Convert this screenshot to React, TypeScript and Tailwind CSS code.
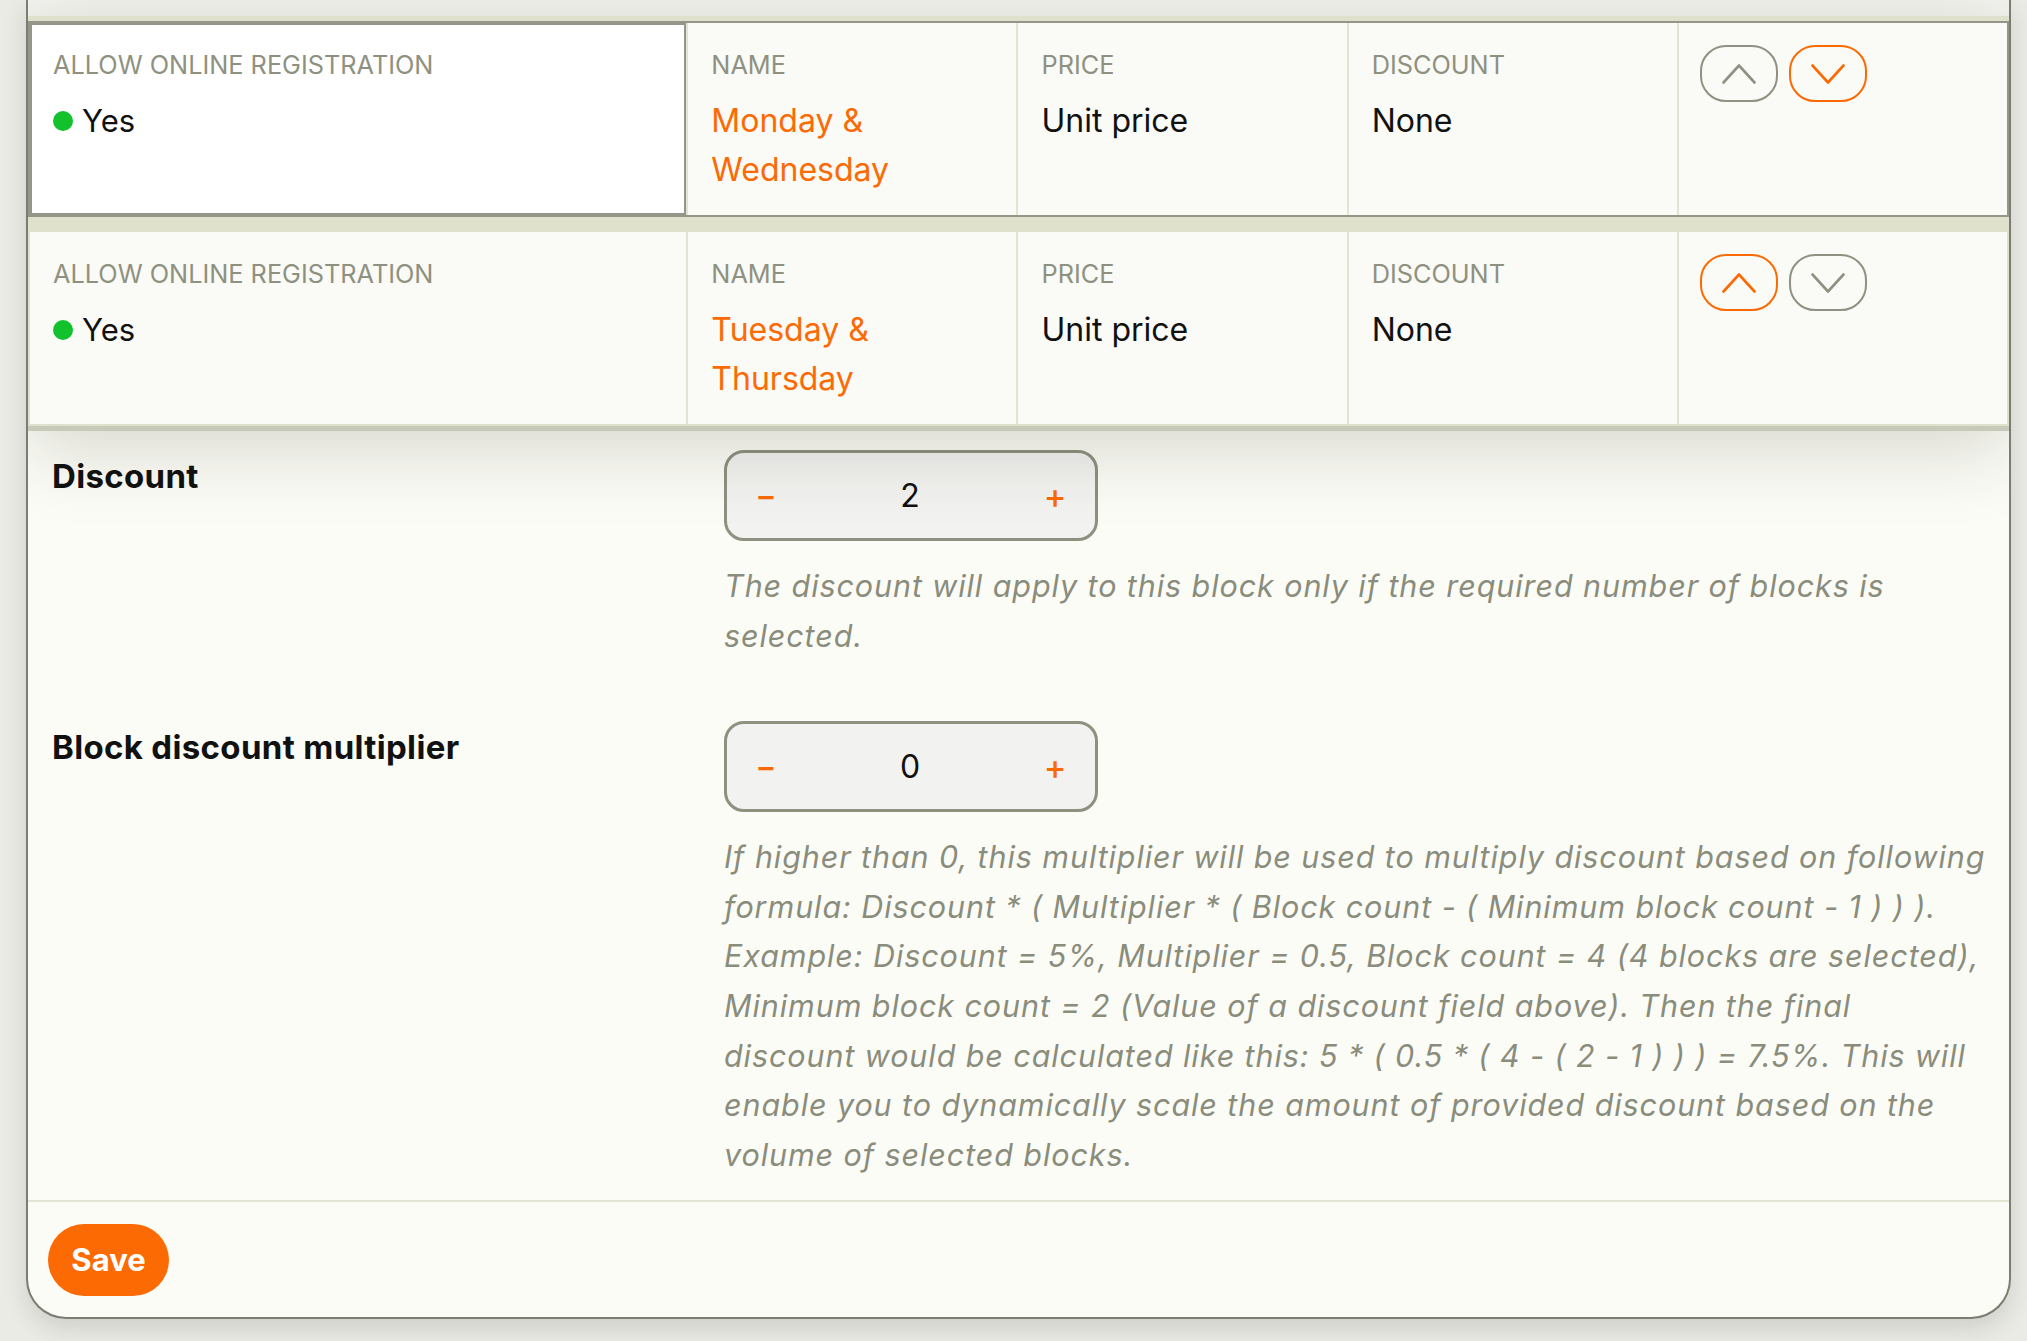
import React from 'react'

type RowProps = {
  name: [string, string]
  selected?: boolean
  upActive?: boolean
  downActive?: boolean
}

function Label({ children }: { children: React.ReactNode }) {
  return <div className="text-[25.3px] leading-[36px] text-[#8f9180] uppercase">{children}</div>
}

function MoveButton({ dir, active }: { dir: 'up' | 'down'; active?: boolean }) {
  return (
    <button
      className={`flex h-[57px] w-[78px] items-center justify-center rounded-[26px] border-2 ${
        active ? 'border-[#fc6a03] text-[#fc6a03]' : 'border-[#8f9182] text-[#8f9182]'
      }`}
    >
      <svg width="34" height="20" viewBox="0 0 34 20" fill="none" stroke="currentColor" strokeWidth="2.6" strokeLinecap="round" strokeLinejoin="round">
        {dir === 'up' ? <polyline points="1.5,18.5 17,1.5 32.5,18.5" /> : <polyline points="1.5,1.5 17,18.5 32.5,1.5" />}
      </svg>
    </button>
  )
}

function BlockRow({ name, selected, upActive, downActive }: RowProps) {
  const cell = 'bg-[#fafaf6] px-[23px] pt-[24px] pb-[21px]'
  return (
    <div
      className={`grid grid-cols-[2fr_1fr_1fr_1fr_1fr] gap-[2px] border-2 bg-[#e2e3d2] ${
        selected ? 'border-[#94968a]' : 'border-[#dfe1cc]'
      }`}
    >
      <div className={`px-[23px] pt-[24px] pb-[21px] ${selected ? 'bg-white shadow-[inset_0_0_0_2px_#94968a]' : 'bg-[#fafaf6]'}`}>
        <Label>Allow online registration</Label>
        <div className="mt-[13px] flex items-center gap-[9px] text-[31px] leading-[49px] text-[#111]">
          <span className="h-[20px] w-[20px] rounded-full bg-[#12c22d]" />
          Yes
        </div>
      </div>
      <div className={cell}>
        <Label>Name</Label>
        <div className="mt-[13px] text-[32px] leading-[49px] text-[#fc6a03]">
          {name[0]}
          <br />
          {name[1]}
        </div>
      </div>
      <div className={cell}>
        <Label>Price</Label>
        <div className="mt-[13px] text-[32px] leading-[49px] text-[#111]">Unit price</div>
      </div>
      <div className={cell}>
        <Label>Discount</Label>
        <div className="mt-[13px] text-[32px] leading-[49px] text-[#111]">None</div>
      </div>
      <div className="flex items-start gap-[11px] bg-[#fafaf6] px-[21px] pt-[22px]">
        <MoveButton dir="up" active={upActive} />
        <MoveButton dir="down" active={downActive} />
      </div>
    </div>
  )
}

function Stepper({ value }: { value: number }) {
  return (
    <div className="flex h-[91px] w-[374px] items-center rounded-[20px] border-[3px] border-[#8e9080] bg-[#f2f2f0]">
      <button className="w-[78px] text-center text-[32px] leading-none font-medium text-[#fc6a03]">−</button>
      <div className="flex-1 text-center text-[32px] text-[#111]">{value}</div>
      <button className="w-[80px] text-center text-[34px] leading-none font-medium text-[#fc6a03]">+</button>
    </div>
  )
}

function Field({ label, value, help }: { label: string; value: number; help: string[] }) {
  return (
    <div className="grid grid-cols-[672px_1fr]">
      <div className="pt-[2px] text-[33px] leading-[49px] font-bold tracking-[0.01em] text-[#111]">{label}</div>
      <div>
        <Stepper value={value} />
        <p className="mt-[20px] text-[30.5px] leading-[49.6px] tracking-[0.03em] whitespace-nowrap text-[#8a8c7c] italic">
          {help.map((line, i) => (
            <span key={i} className="block">
              {line}
            </span>
          ))}
        </p>
      </div>
    </div>
  )
}

export default function App() {
  return (
    <div className="h-[1341px] overflow-hidden bg-[#ebebe6] pr-[16px] pb-[22px] pl-[26px] font-['Inter',sans-serif]">
      <div className="overflow-hidden rounded-b-[40px] border-x-2 border-b-2 border-[#7b7d70] bg-[#fcfcf7] shadow-[0_10px_24px_rgba(0,0,0,0.12)]">
        <div className="h-[16px] bg-[#f2f2ee]" />
        <div className="relative z-10 flex flex-col gap-[13px] border-b-[5px] border-[#c8cab9] bg-[#dfe1cc] pt-[5px] shadow-[0_20px_70px_rgba(40,40,20,0.17)]">
          <BlockRow name={['Monday &', 'Wednesday']} selected downActive />
          <BlockRow name={['Tuesday &', 'Thursday']} upActive />
        </div>
        <div className="flex flex-col gap-[61px] pt-[19px] pb-[21px] pl-[24px]">
          <Field
            label="Discount"
            value={2}
            help={['The discount will apply to this block only if the required number of blocks is', 'selected.']}
          />
          <Field
            label="Block discount multiplier"
            value={0}
            help={[
              'If higher than 0, this multiplier will be used to multiply discount based on following',
              'formula: Discount * ( Multiplier * ( Block count - ( Minimum block count - 1 ) ) ).',
              'Example: Discount = 5%, Multiplier = 0.5, Block count = 4 (4 blocks are selected),',
              'Minimum block count = 2 (Value of a discount field above). Then the final',
              'discount would be calculated like this: 5 * ( 0.5 * ( 4 - ( 2 - 1 ) ) ) = 7.5%. This will',
              'enable you to dynamically scale the amount of provided discount based on the',
              'volume of selected blocks.',
            ]}
          />
        </div>
        <div className="border-t-2 border-[#e3e4d4] pt-[22px] pb-[21px] pl-[20px]">
          <button className="h-[72px] w-[121px] rounded-full bg-[#fc6a03] text-[31px] font-bold text-white">Save</button>
        </div>
      </div>
    </div>
  )
}
